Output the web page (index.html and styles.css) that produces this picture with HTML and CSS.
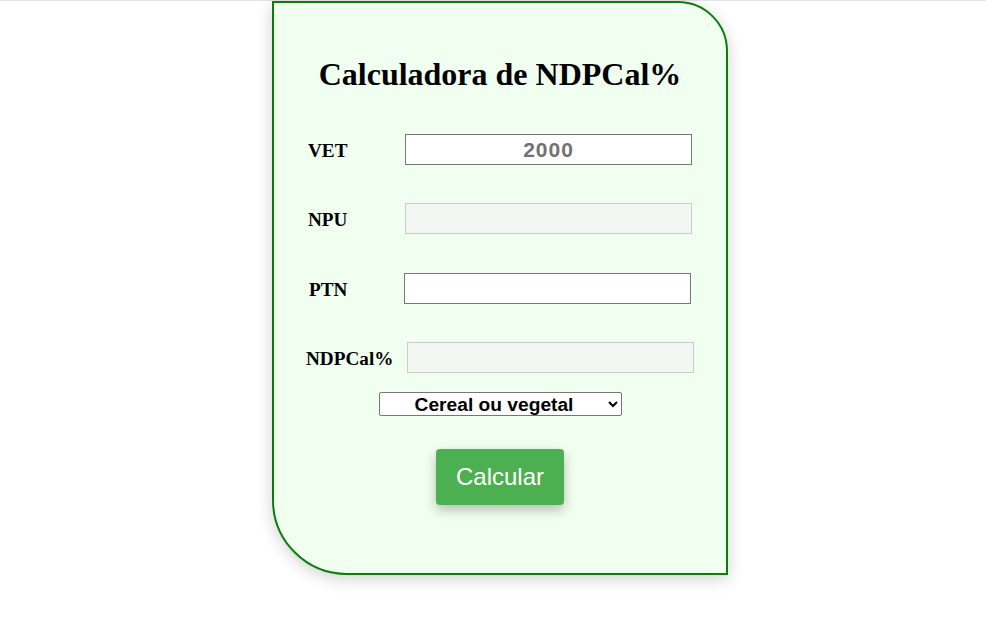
FILE: index.html
```html
<!DOCTYPE html>
<html lang="pt">
<head>
<meta charset="utf-8">
<title>Calculadora de NDPCal%</title>
<link rel="stylesheet" href="styles.css">
</head>
<body>
<div class="page">
  <div class="card">
    <h1 class="title">Calculadora de NDPCal%</h1>
    <div class="row">
      <label class="label" for="vet">VET</label>
      <input class="field field-vet" id="vet" type="text" value="2000">
    </div>
    <div class="row">
      <label class="label" for="npu">NPU</label>
      <input class="field" id="npu" type="text" disabled>
    </div>
    <div class="row">
      <label class="label label-ptn" for="ptn">PTN</label>
      <input class="field" id="ptn" type="text">
    </div>
    <div class="row row-last">
      <label class="label label-wide" for="ndp">NDPCal%</label>
      <input class="field" id="ndp" type="text" disabled>
    </div>
    <div class="select-wrap">
      <select class="select">
        <option>Cereal ou vegetal</option>
        <option>Leguminosa</option>
        <option>Origem animal</option>
      </select>
    </div>
    <div class="button-wrap">
      <button class="button" type="button">Calcular</button>
    </div>
  </div>
</div>
</body>
</html>
```
FILE: styles.css
```css
html, body {
  margin: 0;
  padding: 0;
  background: #ffffff;
}

.page {
  border-top: 1px solid #e6e6e6;
  display: flex;
  justify-content: center;
  padding-left: 14px;
  height: 633px;
  box-sizing: border-box;
}

.card {
  box-sizing: border-box;
  width: 456px;
  height: 574px;
  background: #f0fff0;
  border: 2px solid #0b7d0b;
  border-radius: 0 50px 0 75px;
  box-shadow: 0 4px 16px rgba(0, 0, 0, 0.18);
  padding: 0;
  display: flex;
  flex-direction: column;
  align-items: center;
}

.title {
  font-family: "Liberation Serif", "Times New Roman", serif;
  font-weight: bold;
  font-size: 32px;
  margin: 54px 0 41.6px 0;
  color: #000;
  line-height: 35.4px;
}

.row {
  display: flex;
  align-items: center;
  height: 31px;
  margin-bottom: 38.3px;
}

.row-last {
  margin-bottom: 19px;
}

.label {
  font-family: "Liberation Serif", "Times New Roman", serif;
  font-weight: bold;
  font-size: 19.2px;
  width: 97px;
  padding-top: 3px;
  color: #000;
}

.label-ptn {
  width: 95px;
}

.label-wide {
  width: 101px;
}

.field {
  box-sizing: border-box;
  width: 287px;
  height: 31px;
  margin: 0;
  border: 1px solid #767676;
  background: #ffffff;
  font-family: "Liberation Sans", Arial, sans-serif;
  font-size: 19.2px;
  padding: 1px 2px;
}

.field:disabled {
  background: #f3f6f2;
  border: 1px solid #c9ccc9;
}

.field-vet {
  text-align: center;
  font-weight: bold;
  color: #727272;
  letter-spacing: 1px;
  font-size: 21px;
}

.select-wrap {
  display: flex;
  justify-content: center;
}

.select {
  width: 243px;
  height: 24px;
  box-sizing: border-box;
  font-family: "Liberation Sans", Arial, sans-serif;
  font-weight: bold;
  font-size: 19.2px;
  text-align: center;
  text-align-last: center;
  border: 1px solid #767676;
  border-radius: 2px;
  background: #ffffff;
  color: #000;
  padding: 0;
  margin: 0;
}

.button-wrap {
  margin-top: 33px;
  display: flex;
  justify-content: center;
}

.button {
  width: 128px;
  height: 56px;
  background: #4caf50;
  color: #ffffff;
  border: none;
  border-radius: 4px;
  font-family: "Liberation Sans", Arial, sans-serif;
  font-size: 24px;
  padding: 0;
  box-shadow: 0 5px 12px rgba(0, 0, 0, 0.25);
}
```
